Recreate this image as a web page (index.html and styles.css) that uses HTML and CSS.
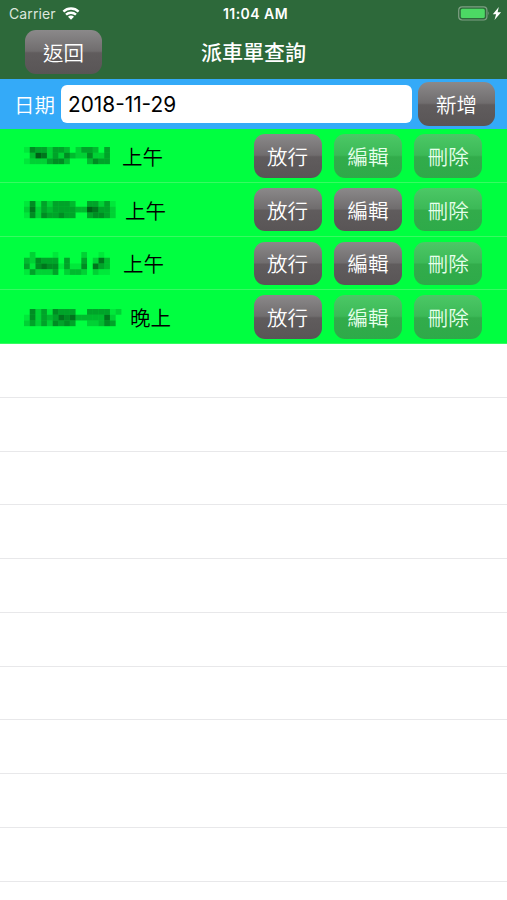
FILE: index.html
```html
<!DOCTYPE html>
<html lang="zh-Hant">
<head>
    <meta charset="UTF-8">
    <meta name="viewport" content="width=device-width, initial-scale=1.0">
    <title>派車單查詢</title>
    <link rel="stylesheet" href="styles.css">
</head>
<body>
    <header class="header">
        <div class="status-bar">
            <div class="status-left">
                <span class="carrier">Carrier</span>
                <svg class="wifi" width="18" height="13" viewBox="0 0 18 13">
                    <path d="M1.4 4.6a11 11 0 0 1 15.2 0M4 7.7a7.2 7.2 0 0 1 10 0" fill="none" stroke="#fff" stroke-width="2.4"/>
                    <path d="M9 12.8L6 9.8a4.2 4.2 0 0 1 6 0z" fill="#fff"/>
                </svg>
            </div>
            <span class="time">11:04 AM</span>
            <div class="status-right">
                <svg width="44" height="16" viewBox="0 0 44 16">
                    <rect x="0.7" y="0.8" width="28.2" height="13.2" rx="3.4" fill="none" stroke="#7f9f84" stroke-width="1.2"/>
                    <rect x="2.8" y="2.8" width="24" height="9.2" rx="1.6" fill="#4cd964"/>
                    <path d="M30.4 5.3q1.6 2.1 0 4.2z" fill="#7f9f84"/>
                    <path d="M40.8 1.1L34.8 8.3h3.3l-1.6 5.6 6.6-7.6h-3.5z" fill="#fff"/>
                </svg>
            </div>
        </div>
        <nav class="nav-bar">
            <button class="btn btn-nav">返回</button>
            <h1 class="title">派車單查詢</h1>
        </nav>
    </header>

    <div class="search-bar">
        <label class="date-label" for="date">日期</label>
        <input class="date-input" type="text" id="date" value="2018-11-29">
        <button class="btn btn-nav">新增</button>
    </div>

    <ul class="list">
        <li class="row order">
            <svg class="plate" width="98" data-mask="154424430244304 037624253225224 122245530003544"></svg>
            <span class="shift">上午</span>
            <div class="actions">
                <button class="btn">放行</button>
                <button class="btn" disabled>編輯</button>
                <button class="btn" disabled>刪除</button>
            </div>
        </li>
        <li class="row order">
            <svg class="plate" width="101" data-mask="1514244430044241 2624344443376442 1525445440045542"></svg>
            <span class="shift">上午</span>
            <div class="actions">
                <button class="btn">放行</button>
                <button class="btn">編輯</button>
                <button class="btn" disabled>刪除</button>
            </div>
        </li>
        <li class="row order">
            <svg class="plate" width="99" data-mask="020001000020010 325444040040263 415655141150643 142224023320211"></svg>
            <span class="shift">上午</span>
            <div class="actions">
                <button class="btn">放行</button>
                <button class="btn">編輯</button>
                <button class="btn" disabled>刪除</button>
            </div>
        </li>
        <li class="row order">
            <svg class="plate" width="106" data-mask="05241544400444412 15243465633333620 24242545400223540"></svg>
            <span class="shift">晚上</span>
            <div class="actions">
                <button class="btn">放行</button>
                <button class="btn" disabled>編輯</button>
                <button class="btn" disabled>刪除</button>
            </div>
        </li>
        <li class="row"></li>
        <li class="row"></li>
        <li class="row"></li>
        <li class="row"></li>
        <li class="row"></li>
        <li class="row"></li>
        <li class="row"></li>
        <li class="row"></li>
        <li class="row"></li>
        <li class="row"></li>
        <li class="row"></li>
    </ul>

    <script src="script.js"></script>
</body>
</html>
```
FILE: styles.css
```css
* {
    box-sizing: border-box;
}

body {
    font-family: Inter, "Noto Sans CJK TC", sans-serif;
    background-color: #fff;
    color: #000;
    margin: 0;
    height: 900px;
    overflow: hidden;
}

.header {
    height: 79px;
    background-color: #2d693a;
    color: #fff;
}

/* Status bar */
.status-bar {
    display: grid;
    grid-template-columns: 1fr auto 1fr;
    align-items: center;
    height: 27px;
    padding: 0 5px 0 9px;
}

.status-left {
    display: flex;
    align-items: center;
    gap: 6px;
}

.carrier {
    font-size: 14px;
    letter-spacing: 0.1px;
    color: #dce6dd;
}

.time {
    font-size: 14px;
    font-weight: 600;
    letter-spacing: 0.45px;
}

.status-right {
    display: flex;
    justify-content: flex-end;
}

/* Navigation bar */
.nav-bar {
    display: grid;
    grid-template-columns: 1fr auto 1fr;
    align-items: center;
    height: 50px;
    padding: 0 25px;
}

.title {
    margin: 0;
    padding-top: 2px;
    font-size: 21px;
    line-height: 30px;
    font-weight: 500;
}

/* Buttons */
.btn {
    width: 68px;
    height: 43.5px;
    padding: 0;
    border: none;
    border-radius: 11px;
    background: linear-gradient(#8b898a 0%, #706d6e 48%, #605c5d 52%, #595556 100%);
    color: #fff;
    font-family: inherit;
    font-size: 20.5px;
    font-weight: 350;
}

.btn:disabled {
    background: linear-gradient(#4cc866 0%, #3cb957 48%, #32ac4b 52%, #2eaa49 100%);
    color: #e6ffeb;
}

.btn-nav {
    width: 77px;
}

/* Date search */
.search-bar {
    display: flex;
    align-items: center;
    height: 50.2px;
    padding: 0 12px 0 14px;
    background-color: #34aaf8;
}

.date-label {
    width: 47px;
    color: #fff;
    font-size: 20.5px;
    font-weight: 350;
}

.date-input {
    width: 351px;
    height: 38px;
    margin-right: 6px;
    padding: 0 7px;
    border: none;
    border-radius: 6px;
    background-color: #fff;
    font-family: inherit;
    font-size: 20.8px;
}

/* Order list */
.list {
    margin: 0;
    padding: 0;
    list-style: none;
}

.row {
    height: 53.75px;
    border-bottom: 1px solid #e8e8ea;
}

.order {
    display: flex;
    align-items: center;
    padding: 0.6px 24.8px 0 24px;
    background-color: #00ff40;
    border-bottom-color: #38fa62;
}

.plate {
    overflow: visible;
}

.shift {
    font-size: 20.5px;
    font-weight: 350;
}

.actions {
    display: flex;
    gap: 12.3px;
    margin-left: auto;
}
```
FILE: script.js
```js
// Masked plate numbers: each digit is the darkness of one block
const BLOCK = 5.73;

document.querySelectorAll('.plate').forEach(function(plate) {
    const lines = plate.dataset.mask.split(' ');
    plate.setAttribute('height', lines.length * BLOCK);

    lines.forEach(function(line, y) {
        line.split('').forEach(function(level, x) {
            const rect = document.createElementNS('http://www.w3.org/2000/svg', 'rect');
            rect.setAttribute('x', x * BLOCK);
            rect.setAttribute('y', y * BLOCK);
            rect.setAttribute('width', BLOCK);
            rect.setAttribute('height', BLOCK);
            rect.setAttribute('fill-opacity', level * 0.09);
            plate.appendChild(rect);
        });
    });
});
```
